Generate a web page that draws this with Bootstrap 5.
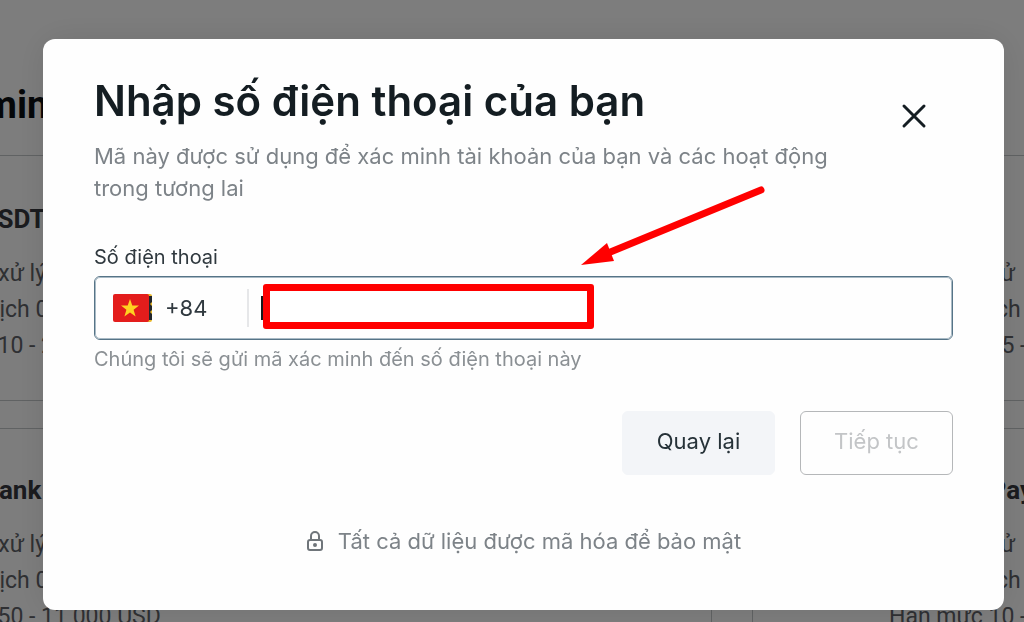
<!DOCTYPE html>
<html lang="vi">
<head>
<meta charset="utf-8">
<meta name="viewport" content="width=device-width, initial-scale=1">
<title>Nhập số điện thoại của bạn</title>
<link rel="stylesheet" href="https://cdn.jsdelivr.net/npm/bootstrap@5.3.0/dist/css/bootstrap.min.css">
<style>
  :root { --ink: #141d22; --muted: #7d8388; --line: #567487; --mark: #ff0000; }
  body { font-family: Inter, "Liberation Sans", sans-serif; height: 100vh; }
  .methods { font-family: Roboto, "Liberation Sans", sans-serif; height: 100vh; overflow: hidden; color: #606268; }
  .methods-head { height: 156px; padding: 82px 0 0; border-bottom: 1px solid #c4c8ca; }
  .methods-head h2 { margin: 0 0 0 -16px; font-size: 38px; font-weight: 700; line-height: 46px; color: #0c1014; white-space: nowrap; }
  /* the list is scrolled sideways under the dialog */
  .methods-grid { display: grid; grid-template-columns: 944px 944px; column-gap: 40px; row-gap: 27px; margin-left: -232px; width: 1928px; }
  .method { height: 245px; padding: 43px 0 0 136px; border: 1px solid #c4c8ca; font-size: 23px; line-height: 36px; }
  .methods-grid .method:nth-child(-n+2) { border-top: 0; padding-top: 45px; }
  .methods-grid .method:nth-child(odd) { padding-left: 129px; }
  .method h3 { margin: 0 0 19px; font-size: 26px; font-weight: 700; line-height: 36px; color: #36383e; }
  .method p { margin: 0; }
  .phone-modal { background: rgba(0, 0, 0, .51); }
  .phone-modal .modal-dialog { max-width: none; margin: 39px 20px 12px 43px; }
  .phone-modal .modal-content { border: 0; border-radius: 12px; background: #fefefe; padding: 35px 51px 52px; box-shadow: 0 0 36px rgba(0, 0, 0, .1); }
  .phone-title { margin: 0; font-size: 42px; font-weight: 600; line-height: 54px; color: var(--ink); }
  .phone-lead { max-width: 780px; margin: 12px 0 0; font-size: 22px; line-height: 32px; color: var(--muted); }
  .close-x { margin: 26px 23px 0 0; width: 32px; height: 32px; }
  .phone-label { margin: 41px 0 7px; font-size: 20px; line-height: 24px; color: #30393f; }
  .phone-field { height: 64px; border: 1px solid var(--line); border-radius: 6px; outline: 1px solid #a9bac5; outline-offset: -2px; padding: 0 18px; }
  .dial { width: 136px; height: 38px; border-right: 2px solid #e6e7e9; gap: 12px; font-size: 22px; color: #30393f; }
  .phone-input { height: 24px; margin-left: 12px; padding: 0; border: 0; border-left: 3px solid #15191c; border-radius: 0; background: transparent; }
  .phone-hint { margin-top: 6px; font-size: 20px; line-height: 26px; color: #8b9094; }
  .mark-box { left: 168px; top: 7px; width: 331px; height: 45px; border: 7px solid var(--mark); border-radius: 3px; background: #fff; }
  .mark-arrow { left: 485px; top: -92px; }
  .phone-actions { margin-top: 39px; gap: 25px; }
  .act { height: 64px; width: 153px; font-size: 22px; border-radius: 6px; padding: 0 0 3px; }
  .act-back, .act-back:hover { background: #f3f5f8; color: #263238; border-color: #f3f5f8; }
  .act-next:disabled { color: #c3c5c7; border-color: #b5b7b9; opacity: 1; }
  .secure { margin-top: 49px; gap: 14px; font-size: 22px; line-height: 34px; color: var(--muted); }
</style>
<script src="https://cdn.jsdelivr.net/npm/bootstrap@5.3.0/dist/js/bootstrap.bundle.min.js"></script>
</head>
<body>
<main class="methods" aria-hidden="true">
  <header class="methods-head"><h2>min</h2></header>
  <div class="methods-grid">
    <section class="method"><h3>Tether USDT</h3><p>Thời gian xử lý</p><p>Phí giao dịch 0</p><p>Hạn mức 10 - 2</p></section>
    <section class="method"><h3>&nbsp;</h3><p>Thời gian xử</p><p>Phí giao dịch</p><p>Hạn mức 15 -</p></section>
    <section class="method"><h3>Mobile bank</h3><p>Thời gian xử lý</p><p>Phí giao dịch 0</p><p>Hạn mức 50 - 11 000 USD</p></section>
    <section class="method"><h3>Binance Pay</h3><p>Thời gian xử</p><p>Phí giao dịch</p><p>Hạn mức 10 -</p></section>
  </div>
</main>

<div class="modal phone-modal d-block" role="dialog" aria-modal="true" aria-labelledby="phone-title">
  <div class="modal-dialog">
    <form class="modal-content">
      <div class="d-flex justify-content-between align-items-start">
        <div>
          <h1 class="phone-title" id="phone-title">Nhập số điện thoại của bạn</h1>
          <p class="phone-lead">Mã này được sử dụng để xác minh tài khoản của bạn và các hoạt động trong tương lai</p>
        </div>
        <button type="button" class="btn p-0 border-0 close-x d-flex align-items-center justify-content-center flex-shrink-0" aria-label="Đóng">
          <svg width="32" height="32" viewBox="0 0 32 32" fill="none" stroke="#141d22" stroke-width="3" stroke-linecap="round"><path d="M6 6l20 20M26 6L6 26"/></svg>
        </button>
      </div>

      <label class="phone-label" for="phone">Số điện thoại</label>
      <div class="phone-field d-flex align-items-center position-relative">
        <div class="dial d-flex align-items-center flex-shrink-0">
          <svg width="40" height="28" viewBox="0 0 40 28" aria-hidden="true">
            <rect x="30" width="9" height="28" rx="2" fill="#e9b92c"/>
            <rect x="30" y="2" width="9" height="24" fill="#22262a"/>
            <path d="M39 8l-2 2 2 2zM39 16l-2 2 2 2z" fill="#e9b92c"/>
            <rect width="36" height="28" rx="2" fill="#e31d1c"/>
            <path d="M17 5l2.300 6.500h6.700l-5.400 4.200 2 6.800-5.600-4-5.600 4 2-6.800L8 11.500h6.700z" fill="#ffd221"/>
          </svg>
          <span>+84</span>
        </div>
        <input id="phone" class="phone-input flex-grow-1" type="tel">
        <div class="mark-box position-absolute"></div>
        <svg class="mark-arrow position-absolute" width="190" height="86" viewBox="0 0 190 86" aria-hidden="true">
          <path d="M181 5L28 68" stroke="#ff0000" stroke-width="7" stroke-linecap="round"/>
          <path d="M1 80L27 58 34 76z" fill="#ff0000"/>
        </svg>
      </div>
      <div class="phone-hint">Chúng tôi sẽ gửi mã xác minh đến số điện thoại này</div>

      <div class="phone-actions d-flex justify-content-end">
        <button type="button" class="btn act act-back">Quay lại</button>
        <button type="submit" class="btn act act-next" disabled>Tiếp tục</button>
      </div>

      <div class="secure d-flex align-items-center justify-content-center">
        <svg width="18" height="22" viewBox="0 0 18 22" fill="none" stroke="#6f757a" stroke-width="2" aria-hidden="true">
          <rect x="2" y="10" width="14" height="10" rx="2"/><path d="M5 10V6a4 4 0 0 1 8 0v4"/><circle cx="9" cy="15" r="1"/>
        </svg>
        <span>Tất cả dữ liệu được mã hóa để bảo mật</span>
      </div>
    </form>
  </div>
</div>
</body>
</html>
